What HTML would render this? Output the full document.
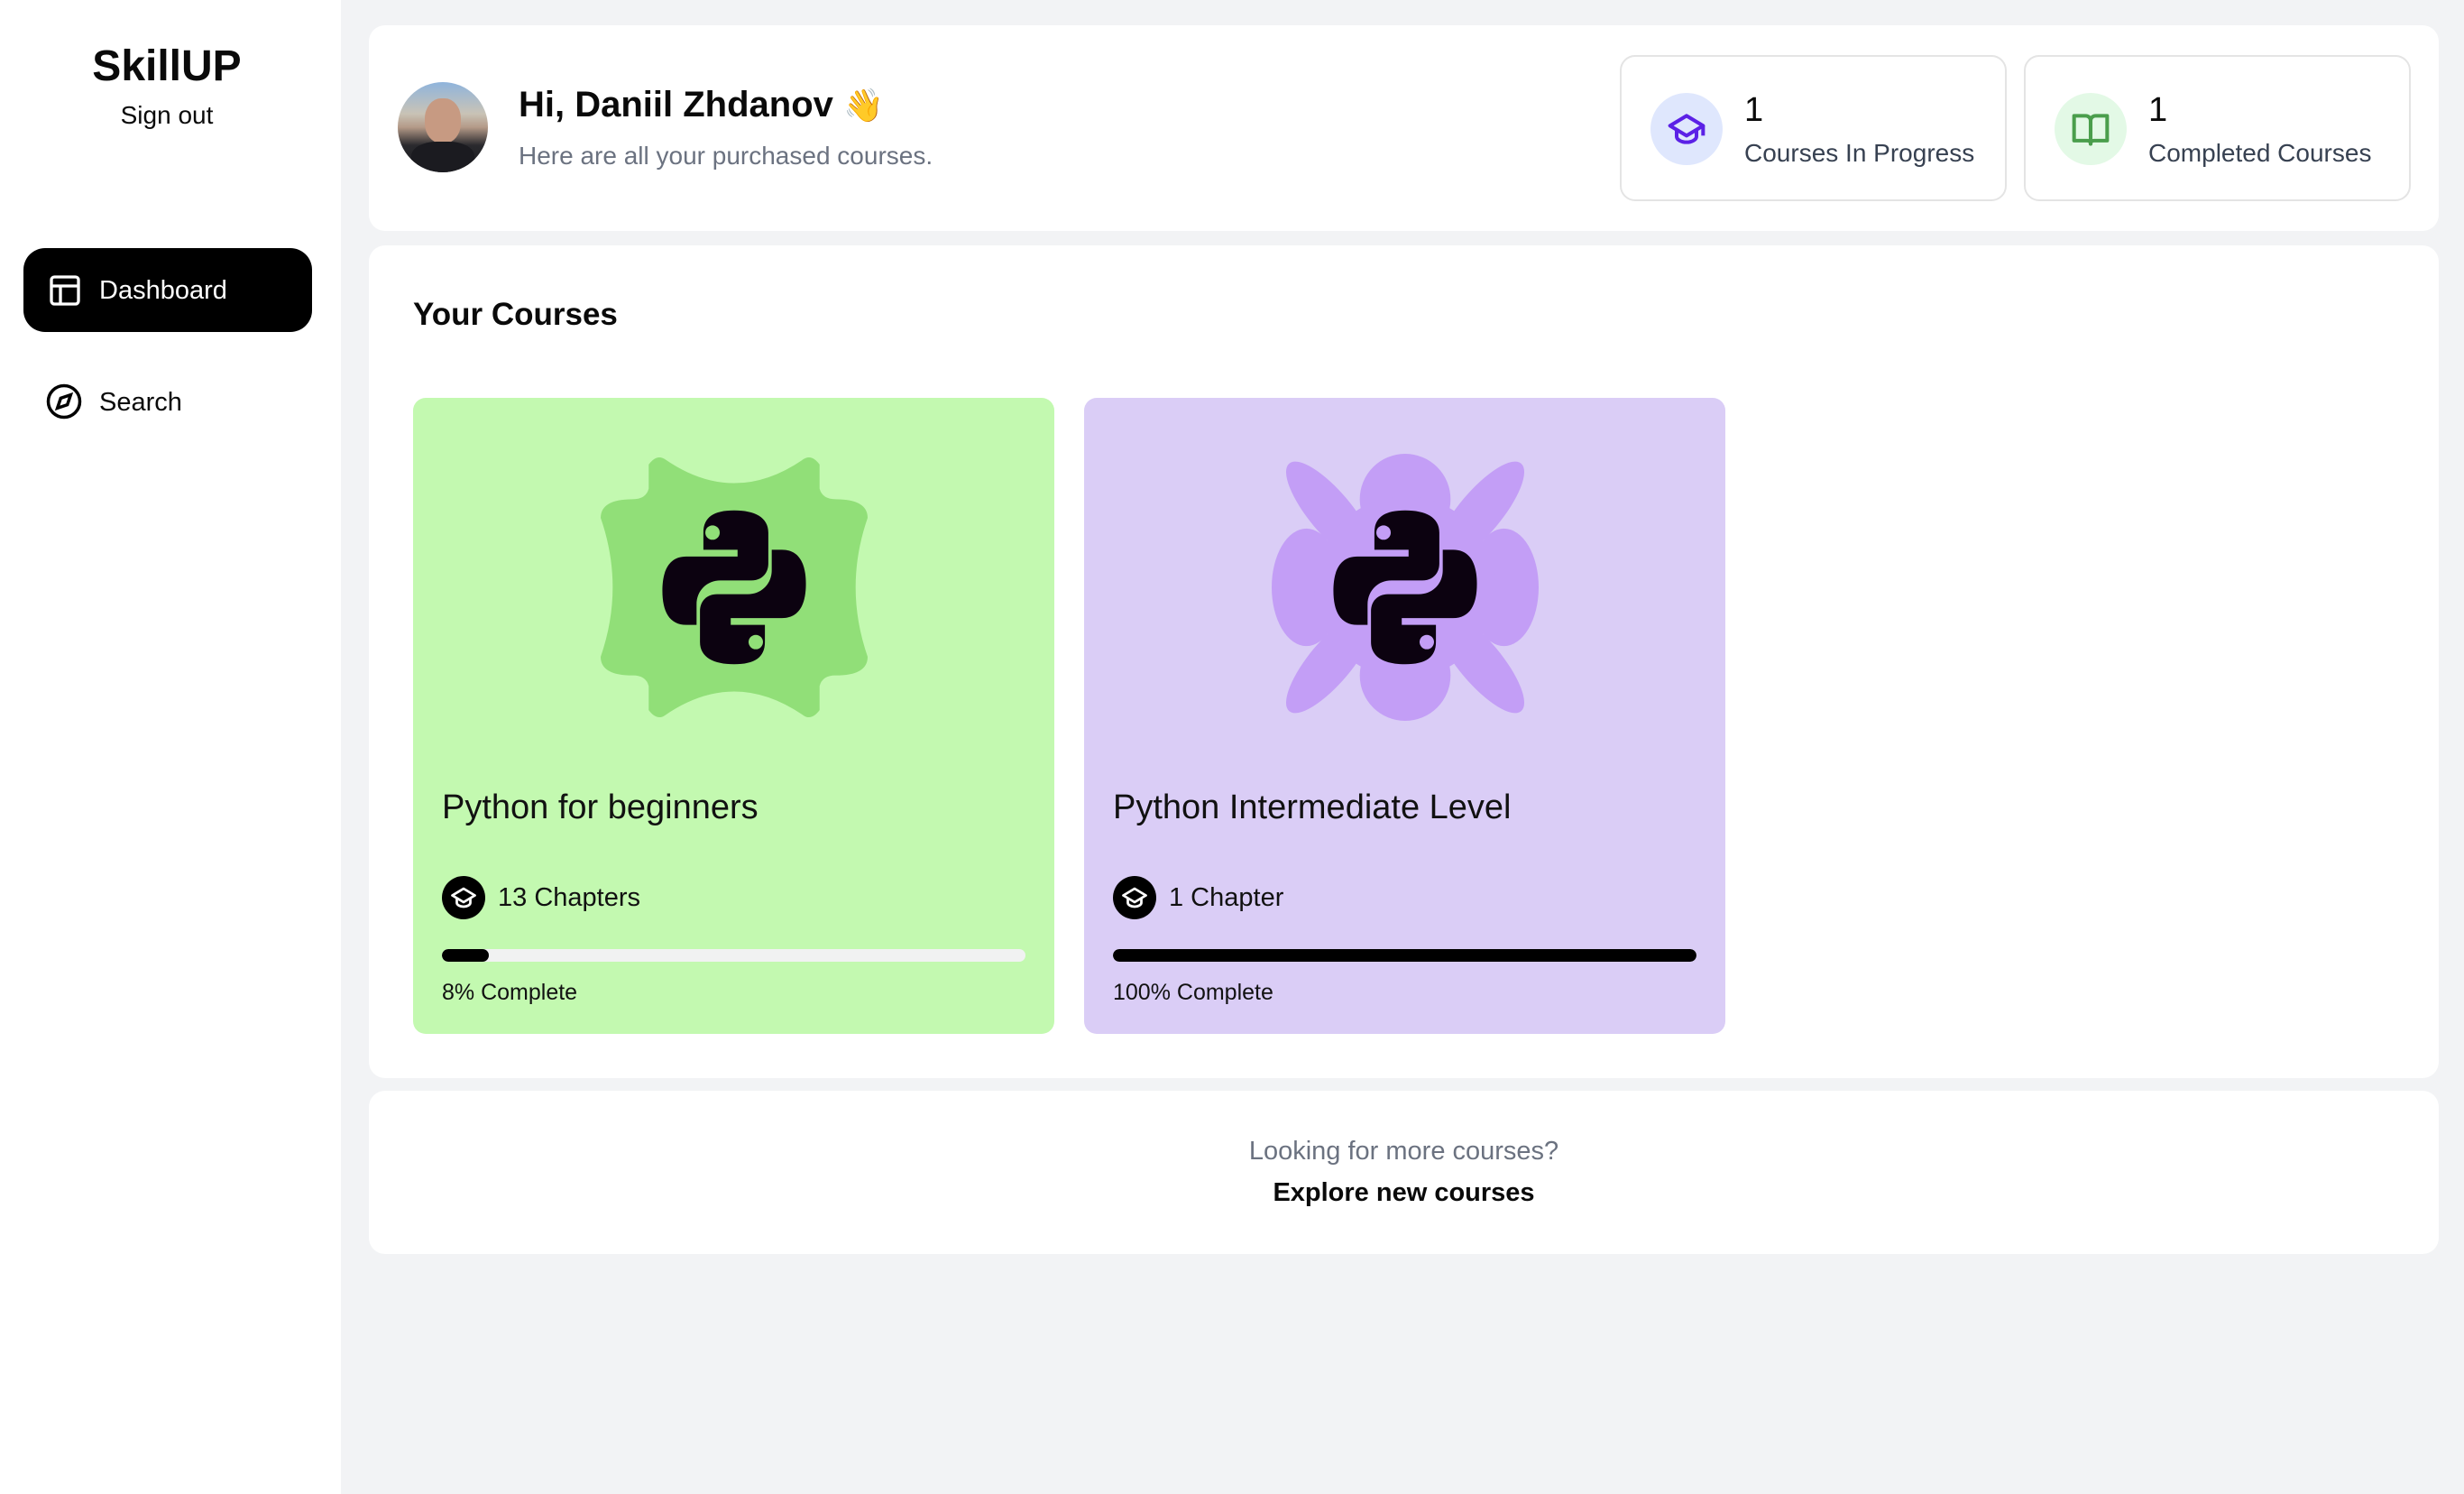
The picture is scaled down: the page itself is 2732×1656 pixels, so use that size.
<!DOCTYPE html>
<html><head><meta charset="utf-8"><style>
*{box-sizing:border-box;margin:0;padding:0}
body{width:2732px;height:1656px;background:#f2f3f5;font-family:"Liberation Sans",sans-serif;color:#0a0a0a;position:relative;overflow:hidden}
.abs{position:absolute}
.side{left:0;top:0;width:378px;height:1656px;background:#fff}
.card{background:#fff;border-radius:18px;position:absolute}
.stat{position:absolute;top:61px;height:162px;width:429px;border:2px solid #e4e4e4;border-radius:17px;background:#fff}
.stat .ic{position:absolute;left:32px;top:40px;width:80px;height:80px;border-radius:50%}
.stat .n{position:absolute;left:136px;top:38px;font-size:38px}
.stat .l{position:absolute;left:136px;top:91px;font-size:28px;color:#374151;white-space:nowrap}
.course{position:absolute;top:441px;width:711px;height:705px;border-radius:14px}
.ct{position:absolute;left:32px;top:433px;font-size:38px;color:#111}
.ch{position:absolute;left:32px;top:530px;height:48px;display:flex;align-items:center;font-size:29px;color:#111}
.ch .c{width:48px;height:48px;border-radius:50%;background:#000;display:flex;align-items:center;justify-content:center;margin-right:14px}
.bar{position:absolute;left:32px;top:611px;width:647px;height:14px;border-radius:7px;background:#f1f2f2;overflow:hidden}
.bar div{height:100%;background:#000;border-radius:7px}
.pc{position:absolute;left:32px;top:645px;font-size:25px;color:#111}
</style></head><body>
<div class="abs side">
  <div class="abs" style="left:0;width:370px;top:46px;text-align:center;font-size:48px;font-weight:bold">SkillUP</div>
  <div class="abs" style="left:0;width:370px;top:112px;text-align:center;font-size:28px">Sign out</div>
  <div class="abs" style="left:26px;top:275px;width:320px;height:93px;background:#000;border-radius:24px;color:#fff">
    <svg class="abs" style="left:26px;top:27px" width="40" height="40" viewBox="0 0 24 24" fill="none" stroke="#fff" stroke-width="2"><rect x="3" y="3" width="18" height="18" rx="2"/><path d="M3 9h18M9 9v12"/></svg>
    <div class="abs" style="left:84px;top:31px;font-size:29px">Dashboard</div>
  </div>
  <svg class="abs" style="left:50px;top:424px" width="42" height="42" viewBox="0 0 24 24" fill="none" stroke="#000" stroke-width="2"><circle cx="12" cy="12" r="10"/><path d="M16.2 7.8l-2.1 6.3-6.3 2.1 2.1-6.3z"/></svg>
  <div class="abs" style="left:110px;top:430px;font-size:29px">Search</div>
</div>

<div class="card" style="left:409px;top:28px;width:2295px;height:228px">
  <div class="abs" style="left:32px;top:63px;width:100px;height:100px;border-radius:50%;overflow:hidden;background:linear-gradient(#8fb4dc 0%,#c9c3b6 35%,#b49a88 50%,#2a2a2e 70%,#1a1a1e 100%)">
    <div class="abs" style="left:30px;top:18px;width:40px;height:50px;border-radius:45%;background:#c79a82"></div>
    <div class="abs" style="left:15px;top:66px;width:70px;height:40px;border-radius:40% 40% 0 0;background:#1b1b20"></div>
  </div>
  <div class="abs" style="left:166px;top:66px;font-size:40px;font-weight:bold">Hi, Daniil Zhdanov <span style="font-size:36px">👋</span></div>
  <div class="abs" style="left:166px;top:129px;font-size:28px;color:#6b7280">Here are all your purchased courses.</div>
</div>
<div class="stat" style="left:1796px">
  <div class="ic" style="background:#dfe7fd"><svg style="margin:18px" width="44" height="44" viewBox="0 0 24 24" fill="none" stroke="#5b21e6" stroke-width="2.2" stroke-linejoin="round"><path d="M12 4L2 10l10 6 10-6z"/><path d="M6 12.5v4c0 2 3 3.5 6 3.5s6-1.5 6-3.5v-4"/><path d="M22 10v6"/></svg></div>
  <div class="n">1</div><div class="l">Courses In Progress</div>
</div>
<div class="stat" style="left:2244px">
  <div class="ic" style="background:#e3f9e6"><svg style="margin:18px" width="44" height="44" viewBox="0 0 24 24" fill="none" stroke="#4a9e4c" stroke-width="2.2" stroke-linejoin="round"><path d="M2 4h7a3 3 0 0 1 3 3v14a2 2 0 0 0-2-2H2z"/><path d="M22 4h-7a3 3 0 0 0-3 3v14a2 2 0 0 1 2-2h8z"/></svg></div>
  <div class="n">1</div><div class="l">Completed Courses</div>
</div>

<div class="card" style="left:409px;top:272px;width:2295px;height:923px">
  <div class="abs" style="left:49px;top:57px;font-size:35px;font-weight:bold">Your Courses</div>
</div>

<svg width="0" height="0" style="position:absolute"><defs>
<g id="py">
<path d="M50 5C38 5 32 9 32 18V28H52V32H22C12 32 8 40 8 52C8 64 12 72 22 72H28V60C28 52 34 46 42 46H60C66 46 70 42 70 36V18C70 9 62 5 50 5Z"/>
<path d="M50 95C62 95 68 91 68 82V72H48V68H78C88 68 92 60 92 48C92 36 88 28 78 28H72V40C72 48 66 54 58 54H40C34 54 30 58 30 64V82C30 91 38 95 50 95Z"/>
</g></defs></svg>

<div class="course" style="left:458px;background:#c3f9b0">
  <svg class="abs" style="left:208px;top:62px" width="296" height="296" viewBox="0 0 100 100"><path fill="#91df78" d="M18 4Q21 0 24 2Q50 20 76 2Q79 0 82 4L82 13Q83 17 88 17Q100 17 100 24Q91 50 100 76Q100 83 88 83Q83 83 82 87L82 96Q79 100 76 98Q50 80 24 98Q21 100 18 96L18 87Q17 83 12 83Q0 83 0 76Q9 50 0 24Q0 17 12 17Q17 17 18 13Z"/>
  <g transform="translate(18 18) scale(0.64)" fill="#0c0210"><use href="#py"/></g>
  <circle cx="41.9" cy="29.5" r="2.7" fill="#91df78"/><circle cx="58.1" cy="70.5" r="2.7" fill="#91df78"/></svg>
  <div class="ct">Python for beginners</div>
  <div class="ch"><div class="c"><svg width="30" height="30" viewBox="0 0 24 24" fill="none" stroke="#fff" stroke-width="2.2" stroke-linejoin="round"><path d="M12 4L2 10l10 6 10-6z"/><path d="M6 12.5v4c0 2 3 3.5 6 3.5s6-1.5 6-3.5v-4"/></svg></div>13 Chapters</div>
  <div class="bar"><div style="width:8%"></div></div>
  <div class="pc">8% Complete</div>
</div>

<div class="course" style="left:1202px;background:#dacdf6">
  <svg class="abs" style="left:208px;top:62px" width="296" height="296" viewBox="0 0 100 100"><g fill="#c39ef6">
  <ellipse cx="22" cy="22" rx="8" ry="24" transform="rotate(-40 22 22)"/><ellipse cx="78" cy="22" rx="8" ry="24" transform="rotate(40 78 22)"/>
  <ellipse cx="22" cy="78" rx="8" ry="24" transform="rotate(40 22 78)"/><ellipse cx="78" cy="78" rx="8" ry="24" transform="rotate(-40 78 78)"/>
  <circle cx="50" cy="17" r="17"/><circle cx="50" cy="83" r="17"/><ellipse cx="13" cy="50" rx="13" ry="22"/><ellipse cx="87" cy="50" rx="13" ry="22"/><circle cx="50" cy="50" r="34"/></g>
  <g transform="translate(18 18) scale(0.64)" fill="#0c0210"><use href="#py"/></g>
  <circle cx="41.9" cy="29.5" r="2.7" fill="#c39ef6"/><circle cx="58.1" cy="70.5" r="2.7" fill="#c39ef6"/></svg>
  <div class="ct">Python Intermediate Level</div>
  <div class="ch"><div class="c"><svg width="30" height="30" viewBox="0 0 24 24" fill="none" stroke="#fff" stroke-width="2.2" stroke-linejoin="round"><path d="M12 4L2 10l10 6 10-6z"/><path d="M6 12.5v4c0 2 3 3.5 6 3.5s6-1.5 6-3.5v-4"/></svg></div>1 Chapter</div>
  <div class="bar"><div style="width:100%"></div></div>
  <div class="pc">100% Complete</div>
</div>

<div class="card" style="left:409px;top:1209px;width:2295px;height:181px;text-align:center">
  <div class="abs" style="left:0;width:100%;top:51px;font-size:29px;color:#6b7280">Looking for more courses?</div>
  <div class="abs" style="left:0;width:100%;top:97px;font-size:29px;font-weight:bold">Explore new courses</div>
</div>
</body></html>
